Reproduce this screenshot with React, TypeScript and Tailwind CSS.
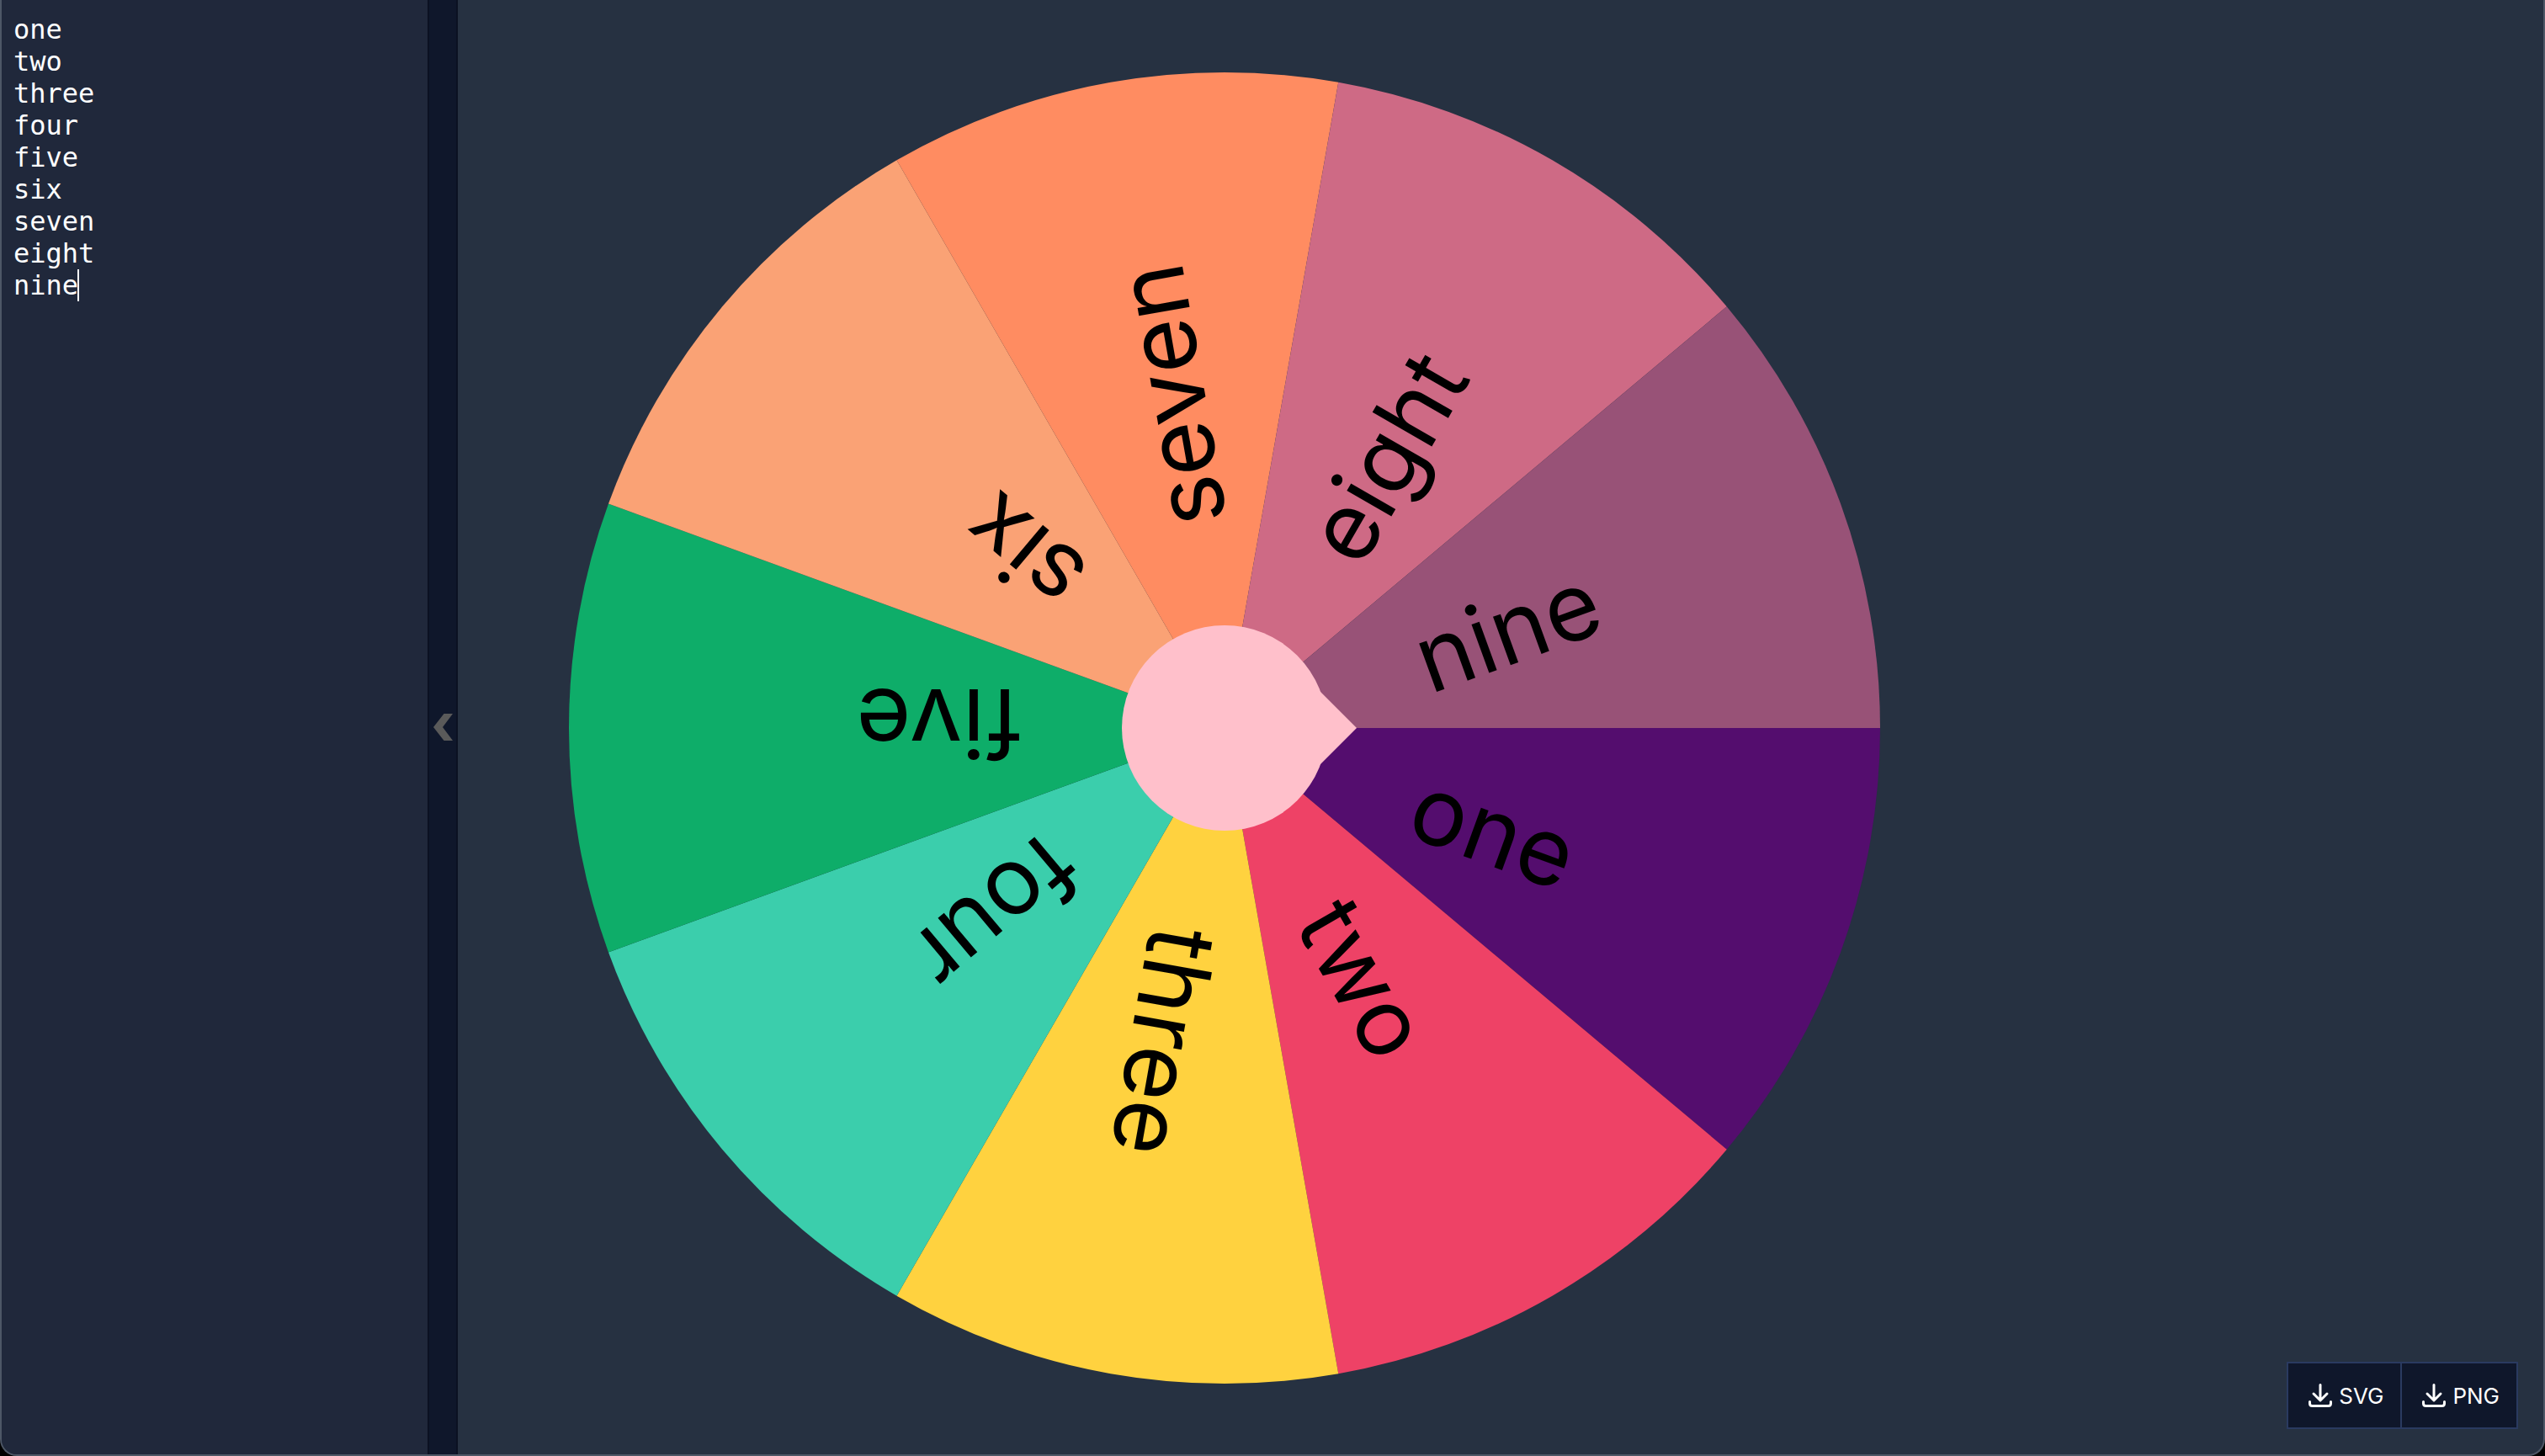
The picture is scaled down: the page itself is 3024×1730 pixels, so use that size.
import { useState } from "react";

const COLORS = [
  "#540d6e", "#ee4266", "#ffd23f", "#3bceac", "#0ead69",
  "#faa275", "#ff8c61", "#ce6a85", "#985277",
];
const INITIAL = "one\ntwo\nthree\nfour\nfive\nsix\nseven\neight\nnine";
const RADIUS = 779;

function point(angle: number) {
  const rad = (angle * Math.PI) / 180;
  return `${RADIUS * Math.cos(rad)} ${RADIUS * Math.sin(rad)}`;
}

function Wheel({ items }: { items: string[] }) {
  const step = 360 / items.length;
  return (
    <svg viewBox="-865 -865 1730 1730" className="block h-full max-w-full" role="img" aria-label="Wheel">
      {items.map((item, i) => (
        <path
          key={item + i}
          d={`M0 0L${point(i * step)}A${RADIUS} ${RADIUS} 0 0 1 ${point((i + 1) * step)}Z`}
          fill={COLORS[i % COLORS.length]}
        />
      ))}
      {items.map((item, i) => (
        <text
          key={item + i}
          x={243}
          y={46}
          transform={`rotate(${(i + 0.5) * step})`}
          className="fill-black font-['Inter',sans-serif] text-[112px]"
        >
          {item}
        </text>
      ))}
      <circle r={122} fill="#ffc0cb" />
      <path d="M157 0L97 -60V60Z" fill="#ffc0cb" />
    </svg>
  );
}

function DownloadIcon() {
  return (
    <svg viewBox="0 0 28 28" className="size-7" fill="none" stroke="currentColor" strokeWidth="3" strokeLinecap="round" strokeLinejoin="round" aria-hidden="true">
      <path d="M14 1.5V19M6 12L14 20L22 12" />
      <path d="M1.5 21.5V23.5Q1.5 26.5 4.5 26.5H23.5Q26.5 26.5 26.5 23.5V21.5" />
    </svg>
  );
}

function DownloadButton({ label }: { label: string }) {
  return (
    <button type="button" className="-ml-0.5 flex h-20 items-center gap-2 border-2 border-[#2a3a60] bg-slate-900 pl-6 pr-5 font-['Inter',sans-serif] text-[26px] text-white">
      <DownloadIcon />
      {label}
    </button>
  );
}

export default function App() {
  const [text, setText] = useState(INITIAL);
  return (
    <div className="h-screen bg-black">
      <div className="flex h-full overflow-hidden rounded-b-[20px] border-x-2 border-b-2 border-[#4d5766] bg-[#263141]">
        <div className="relative w-[506px] shrink-0 bg-[#20283b]">
          <textarea
            aria-label="Wheel entries"
            value={text}
            onChange={(e) => setText(e.target.value)}
            spellCheck={false}
            className="block size-full resize-none bg-transparent py-4 pl-3.5 pr-4 font-['DejaVu_Sans_Mono',monospace] text-[32px] leading-[38px] text-white caret-transparent outline-none"
          />
          <span className="absolute left-[90px] top-80 h-[38px] w-0.5 bg-white" />
        </div>
        <button type="button" aria-label="Collapse editor" className="flex w-9 shrink-0 items-center justify-center border-x-2 border-[#0b1122] bg-slate-900">
          <svg viewBox="0 0 23 32" className="h-8 w-[23px]" aria-hidden="true">
            <path d="M12.5 0H23L11 16L23 32H12.5L0 16Z" fill="#5a5a5a" />
          </svg>
        </button>
        <main className="relative min-w-0 grow">
          <div className="h-screen pl-[46px]">
            <Wheel items={text.split("\n").filter(Boolean)} />
          </div>
          <div className="absolute bottom-[30px] right-[30px] flex">
            <DownloadButton label="SVG" />
            <DownloadButton label="PNG" />
          </div>
        </main>
      </div>
    </div>
  );
}
